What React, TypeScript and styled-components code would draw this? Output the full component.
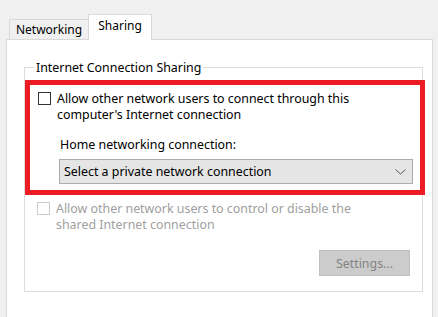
import React from "react";
import styled, { createGlobalStyle } from "styled-components";

const GlobalStyle = createGlobalStyle`
  html, body {
    margin: 0;
    padding: 0;
    background: #f0f0f0;
  }
  body {
    font-family: "Noto Sans", "Liberation Sans", Arial, sans-serif;
    font-size: 12.4px;
    color: #000;
  }
`;

const Window = styled.div`
  width: 438px;
  height: 317px;
  overflow: hidden;
  box-sizing: border-box;
  padding: 14px 5px 0 6px;
  background: #f0f0f0;
`;

const TabStrip = styled.div`
  display: flex;
  align-items: flex-end;
  height: 25px;
  padding-left: 3px;
`;

const Tab = styled.div<{ $active?: boolean }>`
  box-sizing: border-box;
  position: relative;
  z-index: ${({ $active }) => ($active ? 1 : 0)};
  width: ${({ $active }) => ($active ? "64px" : "79px")};
  height: ${({ $active }) => ($active ? "26px" : "20px")};
  margin-bottom: ${({ $active }) => ($active ? "-1px" : "0")};
  padding-top: ${({ $active }) => ($active ? "3px" : "2px")};
  text-align: center;
  line-height: 16px;
  font-size: 12px;
  background: ${({ $active }) => ($active ? "#fff" : "#f0f0f0")};
  border: 1px solid #d9d9d9;
  border-bottom: none;
  ${({ $active }) => (!$active ? "border-right: none;" : "")}
`;

const Panel = styled.div`
  box-sizing: border-box;
  height: 290px;
  background: #fff;
  border: 1px solid #d9d9d9;
  padding: 20px 9px 0 17px;
`;

const Group = styled.fieldset`
  margin: 0;
  padding: 0 0 15px 0;
  border: 1px solid #dcdcdc;
  min-width: 0;
`;

const Legend = styled.legend`
  margin-left: 9px;
  padding: 0 2px;
  line-height: 15px;
`;

const Highlight = styled.div`
  margin: 5px -3px 0 0;
  padding: 6px 7px 6px 8px;
  border: 5px solid #ed1c24;
`;

const CheckRow = styled.div<{ $disabled?: boolean; $indent?: number }>`
  display: flex;
  align-items: flex-start;
  gap: 6px;
  line-height: 16px;
  padding-left: ${({ $indent }) => $indent ?? 0}px;
  color: ${({ $disabled }) => ($disabled ? "#a0a0a0" : "#000")};
`;

const Box = styled.span<{ $disabled?: boolean }>`
  flex: none;
  box-sizing: border-box;
  width: 13px;
  height: 13px;
  margin-top: 1px;
  background: #fff;
  border: 1px solid ${({ $disabled }) => ($disabled ? "#cccccc" : "#333333")};
`;

const Field = styled.div`
  margin: 14px 0 0 21px;
`;

const Label = styled.div`
  line-height: 16px;
  padding-left: 1px;
`;

const Select = styled.div`
  box-sizing: border-box;
  display: flex;
  align-items: center;
  justify-content: space-between;
  height: 25px;
  margin-top: 6px;
  padding: 0 6px 0 4px;
  background: #e5e5e5;
  border: 1px solid #acacac;
`;

const Footer = styled.div`
  display: flex;
  justify-content: flex-end;
  margin: 17px 12px 0 0;
`;

const Button = styled.div`
  box-sizing: border-box;
  width: 91px;
  height: 26px;
  display: flex;
  align-items: center;
  justify-content: center;
  background: #cccccc;
  border: 1px solid #bfbfbf;
  color: #838383;
`;

const Chevron = () => (
  <svg width="11" height="6" viewBox="0 0 11 6">
    <polyline points="0.5,0.5 5.5,5 10.5,0.5" fill="none" stroke="#555" strokeWidth="1" />
  </svg>
);

export default function App() {
  return (
    <>
      <GlobalStyle />
      <Window>
        <TabStrip>
          <Tab>Networking</Tab>
          <Tab $active>Sharing</Tab>
        </TabStrip>
        <Panel>
          <Group>
            <Legend>Internet Connection Sharing</Legend>
            <Highlight>
              <CheckRow>
                <Box />
                <span>
                  Allow other network users to connect through this
                  <br />
                  computer's Internet connection
                </span>
              </CheckRow>
              <Field>
                <Label>Home networking connection:</Label>
                <Select>
                  <span>Select a private network connection</span>
                  <Chevron />
                </Select>
              </Field>
            </Highlight>
            <CheckRow $disabled $indent={12} style={{ marginTop: 6 }}>
              <Box $disabled />
              <span>
                Allow other network users to control or disable the
                <br />
                shared Internet connection
              </span>
            </CheckRow>
            <Footer>
              <Button>Settings...</Button>
            </Footer>
          </Group>
        </Panel>
      </Window>
    </>
  );
}
